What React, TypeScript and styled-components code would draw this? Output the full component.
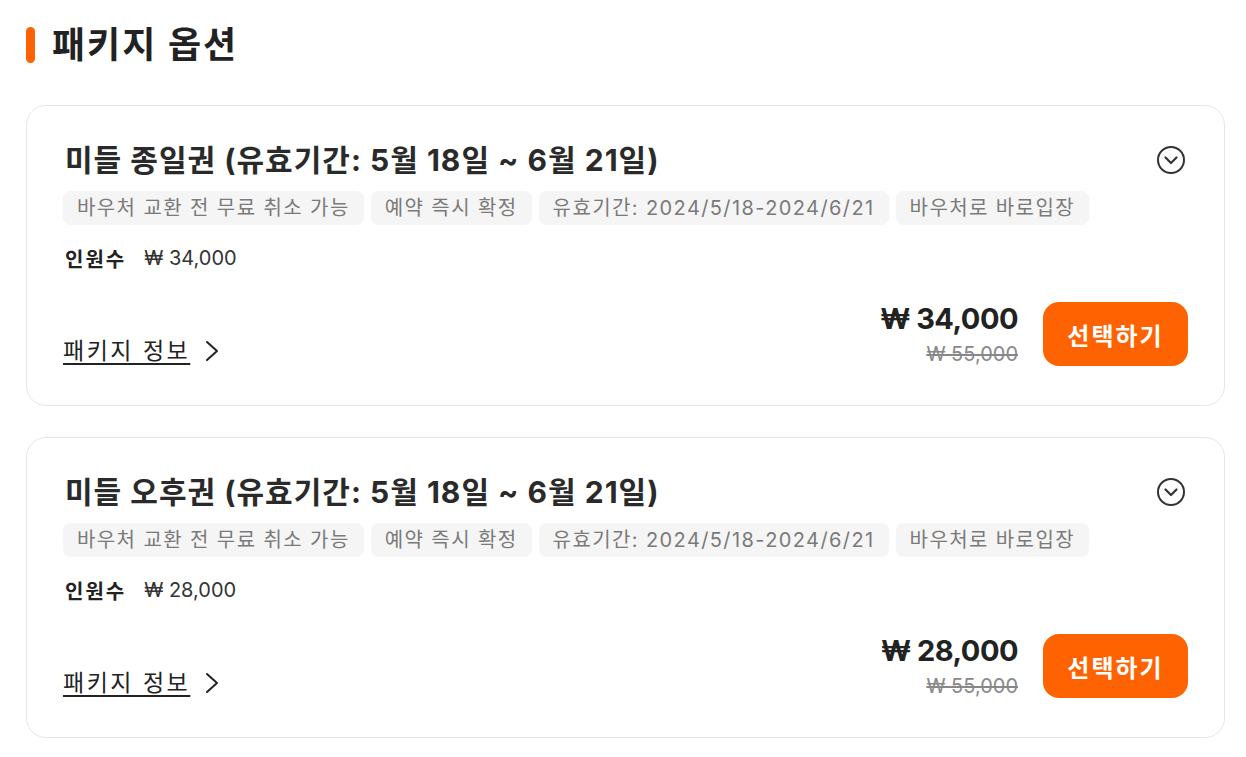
import styled, { createGlobalStyle } from "styled-components"

const GlobalStyle = createGlobalStyle`
    body {
        margin: 0;
        background: #ffffff;
        font-family: "Inter", "Noto Sans CJK KR", sans-serif;
        color: #222222;
    }
`

type PackageOption = {
    name: string
    tags: string[]
    perPerson: string
    price: string
    original: string
}

const options: PackageOption[] = [
    {
        name: "미들 종일권 (유효기간: 5월 18일 ~ 6월 21일)",
        tags: ["바우처 교환 전 무료 취소 가능", "예약 즉시 확정", "유효기간: 2024/5/18-2024/6/21", "바우처로 바로입장"],
        perPerson: "₩ 34,000",
        price: "₩ 34,000",
        original: "₩ 55,000",
    },
    {
        name: "미들 오후권 (유효기간: 5월 18일 ~ 6월 21일)",
        tags: ["바우처 교환 전 무료 취소 가능", "예약 즉시 확정", "유효기간: 2024/5/18-2024/6/21", "바우처로 바로입장"],
        perPerson: "₩ 28,000",
        price: "₩ 28,000",
        original: "₩ 55,000",
    },
]

const CircleChevron = () => (
    <svg width="34" height="34" viewBox="0 0 34 34" fill="none">
        <circle cx="17" cy="17" r="13" stroke="#333" strokeWidth="2" />
        <path d="M11.5 14.5 L17 20 L22.5 14.5" stroke="#333" strokeWidth="2.2" strokeLinecap="round" strokeLinejoin="round" />
    </svg>
)

const ArrowRight = () => (
    <svg width="16" height="24" viewBox="0 0 16 24" fill="none">
        <path d="M3 3 L13 12 L3 21" stroke="#222" strokeWidth="2" strokeLinecap="round" strokeLinejoin="round" />
    </svg>
)

const App = () => {
    return (
        <>
            <GlobalStyle />
            <Page>
                <Heading>
                    <Bar />
                    <HeadingText>패키지 옵션</HeadingText>
                </Heading>
                <List>
                    {options.map((option) => (
                        <Card key={option.name}>
                            <CardHeader>
                                <CardTitle>{option.name}</CardTitle>
                                <IconButton>
                                    <CircleChevron />
                                </IconButton>
                            </CardHeader>
                            <Tags>
                                {option.tags.map((tag) => (
                                    <Tag key={tag}>{tag}</Tag>
                                ))}
                            </Tags>
                            <PeopleRow>
                                <PeopleLabel>인원수</PeopleLabel>
                                <PeoplePrice>{option.perPerson}</PeoplePrice>
                            </PeopleRow>
                            <Footer>
                                <InfoLink>
                                    <span>패키지 정보</span>
                                    <ArrowRight />
                                </InfoLink>
                                <Purchase>
                                    <PriceBox>
                                        <Price>{option.price}</Price>
                                        <OldPrice>{option.original}</OldPrice>
                                    </PriceBox>
                                    <SelectButton>선택하기</SelectButton>
                                </Purchase>
                            </Footer>
                        </Card>
                    ))}
                </List>
            </Page>
        </>
    )
}

export default App

const Page = styled.div`
    padding: 24px 21px 20px 26px;
`

const Heading = styled.div`
    display: flex;
    align-items: center;
    gap: 17px;
    height: 42px;
    margin-bottom: 39px;
`

const Bar = styled.div`
    width: 9px;
    height: 36px;
    border-radius: 5px;
    background: #ff6200;
`

const HeadingText = styled.h2`
    margin: 0;
    font-size: 36px;
    line-height: 42px;
    font-weight: 700;
    letter-spacing: 2px;
    color: #222;
`

const List = styled.div`
    display: flex;
    flex-direction: column;
    gap: 31px;
`

const Card = styled.div`
    border: 1px solid #e6e6e6;
    border-radius: 20px;
    padding: 34px 36px 39px 36px;
`

const CardHeader = styled.div`
    display: flex;
    align-items: center;
    justify-content: space-between;
    height: 40px;
`

const CardTitle = styled.div`
    font-size: 30px;
    line-height: 40px;
    font-weight: 700;
    color: #2a2a2a;
    letter-spacing: 1px;
    padding-left: 2px;
`

const IconButton = styled.div`
    display: flex;
`

const Tags = styled.div`
    display: flex;
    gap: 7px;
    margin-top: 11px;
`

const Tag = styled.div`
    height: 34px;
    padding: 0 14px;
    border-radius: 8px;
    background: #f5f5f5;
    color: #7a7a7a;
    font-size: 20px;
    line-height: 34px;
    font-weight: 400;
    letter-spacing: 1.4px;
    display: flex;
    align-items: center;
`

const PeopleRow = styled.div`
    display: flex;
    align-items: center;
    gap: 18px;
    margin-top: 21px;
    height: 24px;
    padding-left: 2px;
`

const PeopleLabel = styled.span`
    font-size: 20px;
    font-weight: 700;
    letter-spacing: 2px;
    color: #222;
`

const PeoplePrice = styled.span`
    font-size: 20px;
    color: #333;
`

const Footer = styled.div`
    display: flex;
    justify-content: space-between;
    align-items: flex-end;
    margin-top: 32px;
`

const InfoLink = styled.a`
    display: flex;
    align-items: center;
    gap: 14px;
    font-size: 23px;
    line-height: 30px;
    color: #222;
    cursor: pointer;
    span {
        letter-spacing: 2.5px;
        text-decoration: underline;
        text-underline-offset: 4px;
        text-decoration-thickness: 2px;
    }
`

const Purchase = styled.div`
    display: flex;
    align-items: flex-start;
    gap: 25px;
`

const PriceBox = styled.div`
    display: flex;
    flex-direction: column;
    align-items: flex-end;
    gap: 6px;
`

const Price = styled.div`
    font-size: 29px;
    line-height: 34px;
    font-weight: 700;
    letter-spacing: -0.5px;
    color: #222;
`

const OldPrice = styled.div`
    font-size: 20px;
    line-height: 24px;
    color: #888;
    text-decoration: line-through;
`

const SelectButton = styled.button`
    width: 145px;
    height: 64px;
    border: none;
    border-radius: 16px;
    background: #ff6200;
    color: #ffffff;
    font-family: "Inter", "Noto Sans CJK KR", sans-serif;
    font-size: 24px;
    font-weight: 700;
    letter-spacing: 2px;
    cursor: pointer;
`
